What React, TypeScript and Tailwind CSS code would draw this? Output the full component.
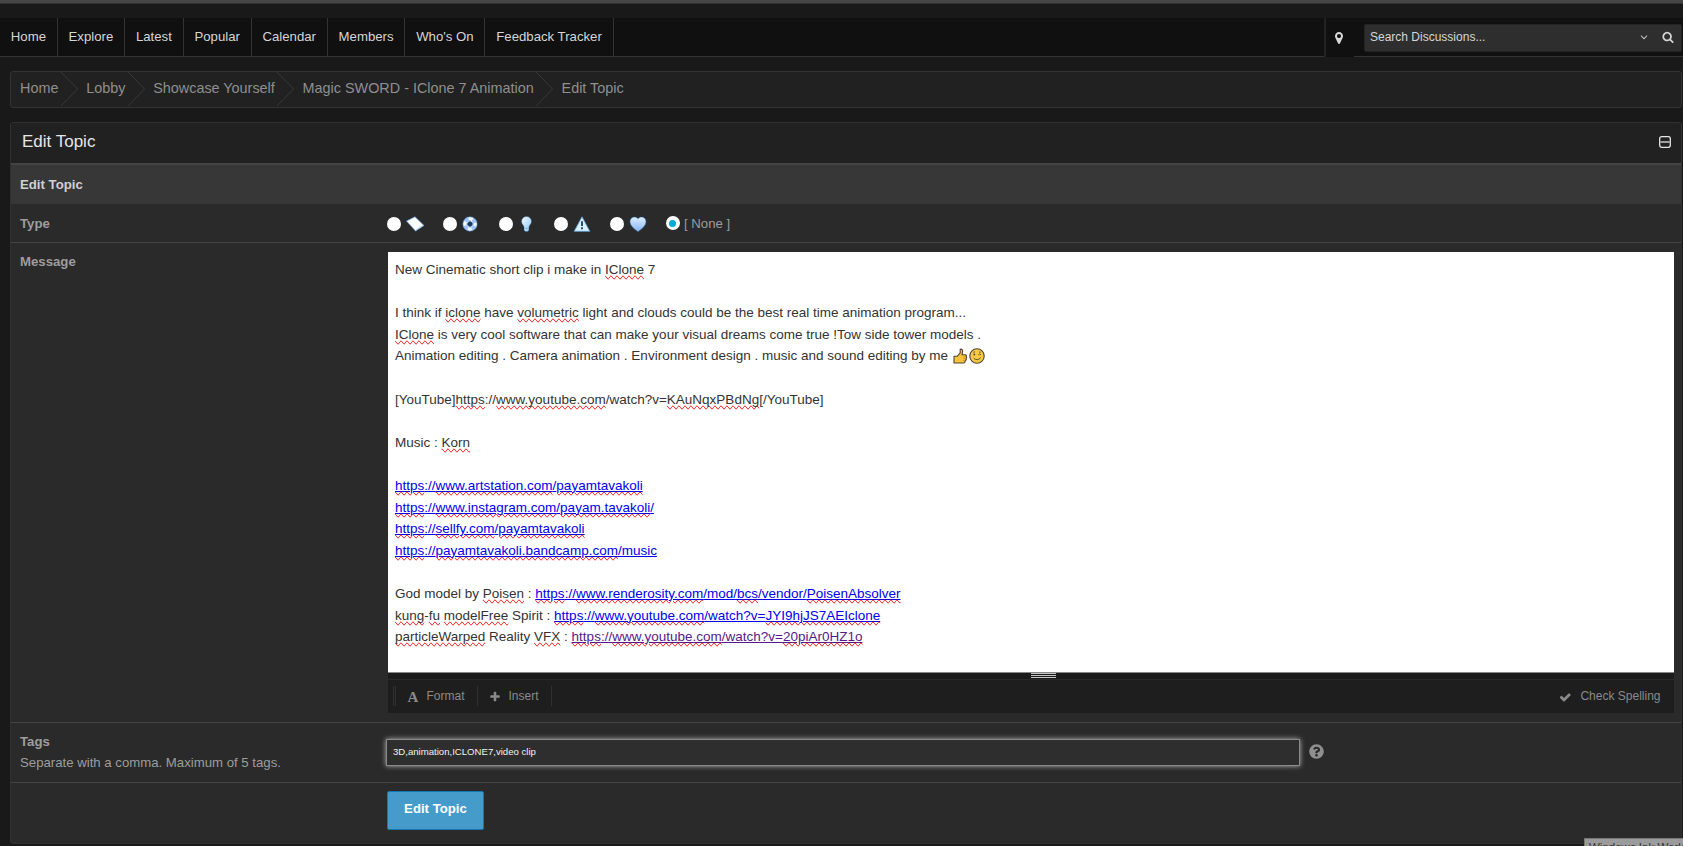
import type { ReactNode } from 'react';
import clsx from 'clsx';
import { FaQuestionCircle } from 'react-icons/fa';

const navItems = ['Home', 'Explore', 'Latest', 'Popular', 'Calendar', 'Members', "Who's On", 'Feedback Tracker'];
const crumbs = ['Home', 'Lobby', 'Showcase Yourself', 'Magic SWORD - IClone 7 Animation', 'Edit Topic'];

const icons = {
  check:
    'M1671 566q0 40-28 68l-724 724-136 136q-28 28-68 28t-68-28l-136-136-362-362q-28-28-28-68t28-68l136-136q28-28 68-28t68 28l294 295 656-657q28-28 68-28t68 28l136 136q28 28 28 68z',
  plus:
    'M1600 736v192q0 40-28 68t-68 28h-416v416q0 40-28 68t-68 28h-192q-40 0-68-28t-28-68v-416h-416q-40 0-68-28t-28-68v-192q0-40 28-68t68-28h416v-416q0-40 28-68t68-28h192q40 0 68 28t28 68v416h416q40 0 68 28t28 68z',
  search:
    'M1216 832q0-185-131.5-316.5t-316.5-131.5-316.5 131.5-131.5 316.5 131.5 316.5 316.5 131.5 316.5-131.5 131.5-316.5zm512 832q0 52-38 90t-90 38q-54 0-90-38l-343-342q-179 124-399 124-143 0-273.5-55.5t-225-150-150-225-55.5-273.5 55.5-273.5 150-225 225-150 273.5-55.5 273.5 55.5 225 150 150 225 55.5 273.5q0 220-124 399l343 343q37 37 37 90z',
  marker:
    'M1152 640q0-106-75-181t-181-75-181 75-75 181 75 181 181 75 181-75 75-181zm256 0q0 109-33 179l-364 774q-16 33-47.5 52t-67.5 19-67.5-19-46.5-52l-365-774q-33-70-33-179 0-212 150-362t362-150 362 150 150 362z',
  down:
    'M1395 736q0 13-10 23l-466 466q-10 10-23 10t-23-10l-466-466q-10-10-10-23t10-23l50-50q10-10 23-10t23 10l393 393 393-393q10-10 23-10t23 10l50 50q10 10 10 23z',
};

const Icon = ({ name, className }: { name: keyof typeof icons; className?: string }) => (
  <svg viewBox="0 0 1792 1792" fill="currentColor" className={clsx('shrink-0', className)} aria-hidden="true">
    <path d={icons[name]} />
  </svg>
);

// Word flagged by the spell checker
const Sp = ({ children }: { children: ReactNode }) => (
  <span className="[text-decoration-line:spelling-error]">{children}</span>
);

const Link = ({ visited, children }: { visited?: boolean; children: ReactNode }) => (
  <a className={clsx('underline', visited ? 'text-[#551a8b]' : 'text-[#0000ee]')}>{children}</a>
);

const Radio = ({ checked }: { checked?: boolean }) => (
  <span className="flex size-[14px] shrink-0 items-center justify-center rounded-full bg-white">
    {checked && <span className="size-[7px] rounded-full bg-[#00a9d8]" />}
  </span>
);

const topicIcons = [
  // Note
  <svg key="note" viewBox="0 0 18 16" className="h-4 w-[18px]">
    <path d="M.5 5 9 .8 18 9.500 9.500 15Z" fill="#fff" stroke="#5d9ad6" strokeWidth="0.7" />
    <path d="M9.500 14.500 17 9.500" stroke="#a7cdf0" />
  </svg>,
  // Lifebuoy
  <svg key="buoy" viewBox="0 0 18 16" className="h-4 w-[18px]">
    <circle cx="8" cy="8" r="4.700" fill="none" stroke="#f2f8ff" strokeWidth="5" />
    <circle cx="8" cy="8" r="4.700" fill="none" stroke="#a3c4fa" strokeWidth="5" strokeDasharray="3.690 3.690" strokeDashoffset="5.530" />
    <circle cx="8" cy="8" r="7.200" fill="none" stroke="#3f7cb8" strokeWidth="0.600" />
    <circle cx="8" cy="8" r="2.300" fill="#173c61" />
    <path d="M8 4.600V11.400M4.600 8H11.400" stroke="#173c61" strokeWidth="1" />
  </svg>,
  // Light bulb
  <svg key="bulb" viewBox="0 0 18 16" className="h-4 w-[18px]">
    <defs>
      <linearGradient id="bulb" x1="0" y1="0" x2="1" y2="1">
        <stop offset="0" stopColor="#f3fbff" />
        <stop offset="1" stopColor="#8cc6f8" />
      </linearGradient>
    </defs>
    <path
      d="M8.500.5a5 5 0 0 1 5 5C13.500 8.200 11.300 9 11 11v3L9.900 15.500H7.100L6 14V11C5.700 9 3.500 8.200 3.500 5.500A5 5 0 0 1 8.500.5Z"
      fill="url(#bulb)"
      stroke="#245b8b"
      strokeWidth="0.400"
    />
    <path d="M6.200 12.200H10.800" stroke="#6fa6d4" strokeWidth="0.700" />
  </svg>,
  // Warning
  <svg key="warn" viewBox="0 0 18 16" className="h-4 w-[18px]">
    <path d="M9 .8 16.800 15.300H1.200Z" fill="#d9f0ff" stroke="#5aa3dc" strokeWidth="0.800" strokeLinejoin="round" />
    <path d="M9 5.200V10M9 11.300V13.200" stroke="#12304e" strokeWidth="1.700" />
  </svg>,
  // Heart
  <svg key="heart" viewBox="0 0 18 16" className="h-4 w-[18px]">
    <defs>
      <linearGradient id="heart" x1="0" y1="0" x2="0" y2="1">
        <stop offset="0" stopColor="#dcedff" />
        <stop offset="1" stopColor="#86b4f5" />
      </linearGradient>
    </defs>
    <path
      d="M9 15.700C5 13 1 9.800 1 5.600 1 1 6.500-.3 9 2.700 11.500-.3 17 1 17 5.600 17 9.800 13 13 9 15.700Z"
      fill="url(#heart)"
      stroke="#2f6aa3"
      strokeWidth="0.500"
    />
  </svg>,
];

const ThumbsUp = () => (
  <svg viewBox="0 0 16 16" className="inline-block size-4 align-[-4px]" aria-hidden="true">
    <path
      d="M2 8.300H5.200L8.200 4.800V1.300C9.900.7 10.900 1.800 10.600 3.500L10 6.800H13.200C14.400 6.800 14.700 7.800 14.300 8.500 14.800 9.100 14.700 9.900 14.200 10.400 14.500 11 14.200 11.700 13.700 12 13.900 12.800 13.500 13.300 13 13.600 13 14.500 12.400 15 11.700 15H2Z"
      fill="#fbc33c"
      stroke="#4b4637"
      strokeWidth="1.100"
      strokeLinejoin="round"
    />
    <path d="M11.300 8.800H13.800M11.300 10.600H13.700M11.200 12.500H13.200" stroke="#a87618" strokeWidth="0.600" />
  </svg>
);

const Wink = () => (
  <svg viewBox="0 0 16 16" className="ml-[1.500px] inline-block size-4 align-[-4px]" aria-hidden="true">
    <circle cx="8" cy="8" r="7.200" fill="#fbc93f" stroke="#4b4637" strokeWidth="1.100" />
    <circle cx="5.300" cy="6.500" r="0.900" fill="#4b4637" />
    <path
      d="M9.300 6.800Q10.600 5.500 12 6.600M4.300 4.300 6 3.800M10 4 11.700 4.300M4.600 10.100Q8.300 13.500 11.600 9.700"
      fill="none"
      stroke="#4b4637"
      strokeWidth="0.900"
    />
  </svg>
);

const NavBar = () => (
  <nav className="flex h-[39px] bg-[#101010] text-[13.2px] text-[#d6d6d6]">
    <div className="flex flex-1 border-b border-[#333]">
      {navItems.map((item) => (
        <a key={item} className="flex items-center border-r border-[#333] px-[10.800px]">
          {item}
        </a>
      ))}
    </div>
    <div className="flex w-[30px] items-center justify-center border-l-2 border-[#222] pr-0.5">
      <Icon name="marker" className="size-[14px]" />
    </div>
    <div className="flex w-[329px] border-b border-[#333] pt-[5.500px] pr-px pl-[10px]">
      <div className="flex h-[28px] flex-1 items-center rounded-[2px] border border-[#232323] bg-[#2e2e2e] pr-[7px] pb-px pl-[5px] text-[12px]">
        <span className="flex-1">Search Discussions...</span>
        <Icon name="down" className="mr-3 size-[12px]" />
        <Icon name="search" className="size-[12px]" />
      </div>
    </div>
  </nav>
);

const Breadcrumb = () => (
  <div className="mt-3.5 mr-px ml-[10px] flex h-[37px] items-center rounded-[3px] border border-[#333] bg-[#212121] pl-[9px] text-[14.4px] text-[#8f8f8f]">
    {crumbs.map((crumb, i) => (
      <div key={crumb} className="flex h-full items-center">
        <span className="pb-px">{crumb}</span>
        {i < crumbs.length - 1 && (
          <svg viewBox="0 0 17 35" className="mr-[8.300px] ml-[2.500px] h-[35px] w-[17px]" fill="none">
            <path d="M0 0 16.500 17 0 34" stroke="#393939" />
          </svg>
        )}
      </div>
    ))}
  </div>
);

const Message = () => (
  <div className="h-[421px] border-b border-[#888] bg-white px-[7.500px] pt-[7px] text-[13.5px] leading-[21.6px] text-[#333]">
    <p>New Cinematic short clip i make in <Sp>IClone</Sp> 7</p>
    <br />
    <p>I think if <Sp>iclone</Sp> have <Sp>volumetric</Sp> light and clouds could be the best real time animation program...</p>
    <p><Sp>IClone</Sp> is very cool software that can make your visual dreams come true !Tow side tower models .</p>
    <p className="h-[21.6px]">
      Animation editing . Camera animation . Environment design . music and sound editing by me <ThumbsUp /><Wink />
    </p>
    <br />
    <p>[YouTube]<Sp>https</Sp>://<Sp>www.youtube.com</Sp>/watch?v=<Sp>KAuNqxPBdNg</Sp>[/YouTube]</p>
    <br />
    <p>Music : <Sp>Korn</Sp></p>
    <br />
    <p><Link><Sp>https</Sp>://<Sp>www.artstation.com</Sp>/<Sp>payamtavakoli</Sp></Link></p>
    <p><Link><Sp>https</Sp>://<Sp>www.instagram.com</Sp>/<Sp>payam.tavakoli</Sp>/</Link></p>
    <p><Link><Sp>https</Sp>://<Sp>sellfy.com</Sp>/<Sp>payamtavakoli</Sp></Link></p>
    <p><Link><Sp>https</Sp>://<Sp>payamtavakoli.bandcamp.com</Sp>/music</Link></p>
    <br />
    <p>God model by <Sp>Poisen</Sp> : <Link><Sp>https</Sp>://<Sp>www.renderosity.com</Sp>/mod/<Sp>bcs</Sp>/vendor/<Sp>PoisenAbsolver</Sp></Link></p>
    <p><Sp>kung</Sp>-<Sp>fu</Sp> <Sp>modelFree</Sp> Spirit : <Link><Sp>https</Sp>://<Sp>www.youtube.com</Sp>/watch?v=<Sp>JYI9hjJS7AEIclone</Sp></Link></p>
    <p><Sp>particleWarped</Sp> Reality <Sp>VFX</Sp> : <Link visited><Sp>https</Sp>://<Sp>www.youtube.com</Sp>/watch?v=<Sp>20piAr0HZ1o</Sp></Link></p>
  </div>
);

const Editor = () => (
  <div className="ml-[0.500px] w-[1286.500px]">
    <Message />
    {/* Resize handle */}
    <div className="flex h-[7px] items-start justify-center border-b border-[#2a2a2a] bg-[#1c1c1c] pl-[25px]">
      <div className="flex w-[25px] flex-col gap-px">
        <span className="h-px bg-[#c4c4c4]" />
        <span className="h-px bg-[#c4c4c4]" />
        <span className="h-px bg-[#c4c4c4]" />
      </div>
    </div>
    <div className="flex h-[33px] items-center bg-[#1e1e1e] pb-px pl-[5px] text-[12px] text-[#8a8a8a]">
      <span className="h-5 w-[3px] border-x border-[#303030]" />
      <span className="ml-3 flex h-5 items-center border-r border-[#303030] pr-3">
        <span className="mt-0.5 mr-2 w-[11px] font-['Liberation_Serif',serif] text-[15px] font-bold">A</span>
        Format
      </span>
      <span className="flex h-5 items-center border-r border-[#303030] pr-3 pl-[11px]">
        <Icon name="plus" className="mt-px mr-2 size-[12px]" />
        Insert
      </span>
      <span className="ml-auto flex items-center pr-[13.500px]">
        <Icon name="check" className="mt-0.5 mr-[9px] size-[12.500px]" />
        Check Spelling
      </span>
    </div>
  </div>
);

const FieldRow = ({ label, className, children }: { label?: ReactNode; className?: string; children: ReactNode }) => (
  <div className={clsx('flex bg-[#2a2a2a]', className)}>
    <div className="w-[376px] shrink-0 pl-[9px] text-[13.2px] leading-[21.6px] text-[#9d9d9d]">{label}</div>
    {children}
  </div>
);

export default function App() {
  return (
    <div className="relative h-[846px] w-[1683px] overflow-hidden bg-[#191919] font-['Liberation_Sans',Arial,sans-serif] text-[13.2px]">
      <div className="h-1 border-b border-[#333] bg-[#454545]" />
      <div className="h-[14px]" />
      <NavBar />
      <Breadcrumb />

      <div className="mt-3.5 mr-px ml-[10px] h-[722px] rounded-[3px] border border-[#303030] bg-[#2a2a2a]">
        <div className="flex h-10 items-center justify-between bg-[#212121] pr-[10px] pb-[3px] pl-[11px] text-[17px] text-[#e6e6e6]">
          <span>Edit Topic</span>
          <svg viewBox="0 0 12 12" className="size-3" fill="none" stroke="currentColor">
            <rect x="0.700" y="0.700" width="10.600" height="10.600" rx="2" strokeWidth="1.300" />
            <path d="M1.500 6H10.500" strokeWidth="1.300" />
          </svg>
        </div>
        <div className="flex h-[41px] items-center border-t-2 border-[#444] bg-[#373737] pl-[9px] font-bold text-[#d0d0d0]">
          Edit Topic
        </div>

        <FieldRow className="h-[39px] items-center border-b border-[#444] pt-px" label={<b>Type</b>}>
          {topicIcons.map((icon) => (
            <label key={icon.key} className="flex w-[55.800px] items-center gap-[5px]">
              <Radio />
              {icon}
            </label>
          ))}
          <label className="flex items-center gap-[4px] text-[#9d9d9d]">
            <Radio checked />
            [ None ]
          </label>
        </FieldRow>

        <FieldRow className="h-[480px] border-b border-[#444] pt-[9px]" label={<b className="-mt-px block">Message</b>}>
          <Editor />
        </FieldRow>

        <FieldRow
          className="h-[60px] border-b border-[#444] pt-[8px]"
          label={
            <>
              <b>Tags</b>
              <p className="-mt-px">Separate with a comma. Maximum of 5 tags.</p>
            </>
          }
        >
          <div className="mt-[8px] -ml-px flex h-[27px] w-[914px] items-center border border-[#8a8a8a] bg-[#2e2e2e] pl-[6px] text-[9.600px] text-[#f2f2f2] shadow-[0_0_5px_#b5b5b5]">
            3D,animation,ICLONE7,video clip
          </div>
          <FaQuestionCircle className="mt-[13px] ml-[9px] size-[15px] text-[#8f8f8f]" />
        </FieldRow>

        <FieldRow className="pt-[8px]">
          <button className="h-[39px] w-[97px] rounded-[2px] border border-[#1478b4] bg-[#459ccb] pb-[3px] font-bold text-white">
            Edit Topic
          </button>
        </FieldRow>
      </div>

      {/* Taskbar tooltip peeking in at the corner */}
      <div className="absolute top-[838px] left-[1584px] h-[20px] w-[140px] border border-[#777] bg-[#9b9b9b] pl-1 text-[11.500px] leading-[16px] whitespace-nowrap text-[#333]">
        Windows Ink Workspace
      </div>
    </div>
  );
}
